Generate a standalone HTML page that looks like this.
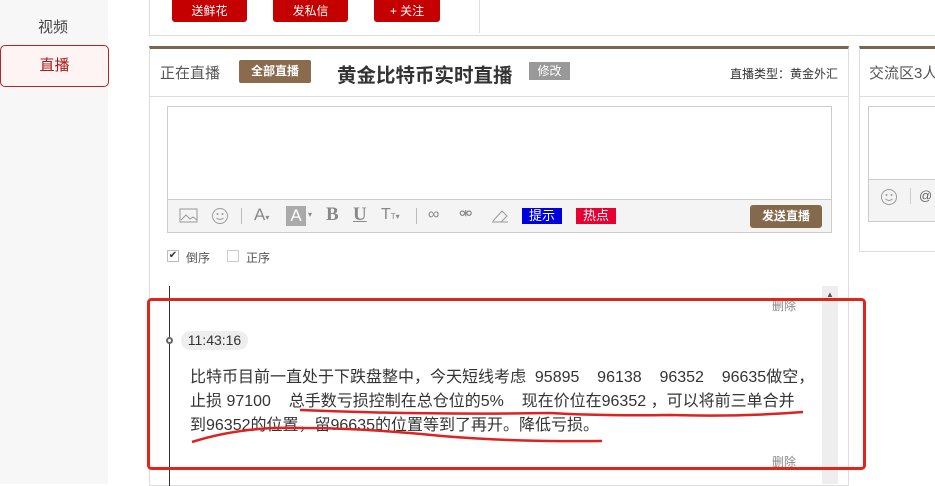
<!DOCTYPE html>
<html><head><meta charset="utf-8"><style>
*{margin:0;padding:0;box-sizing:border-box}
body{width:935px;height:484px;overflow:hidden;background:#fff;font-family:"Liberation Sans","Noto Sans CJK SC",sans-serif;position:relative;color:#333}
.a{position:absolute;white-space:nowrap}
.btn{position:absolute;top:0;height:22px;background:#c40000;color:#fff;font-size:12px;text-align:center;line-height:22px;border-radius:0 0 3px 3px}
.tb{position:absolute;top:205px;font-size:17px;color:#888;line-height:20px}
</style></head><body>
<div class="a" style="left:0;top:0;width:108px;height:484px;background:#f7f7f7"></div>
<div class="a" style="left:38px;top:16px;font-size:15px;color:#444">视频</div>
<div class="a" style="left:0;top:45px;width:109px;height:42px;border:1px solid #b22;border-radius:5px;background:#fff4f4;color:#b01818;font-size:15px;text-align:center;line-height:40px">直播</div>

<div class="a" style="left:149px;top:-2px;width:800px;height:38px;border:1px solid #ddd"></div>
<div class="btn" style="left:172px;width:75px">送鲜花</div>
<div class="btn" style="left:273px;width:75px">发私信</div>
<div class="btn" style="left:374px;width:66px">+ 关注</div>
<div class="a" style="left:479px;top:0;width:1px;height:33px;background:#ddd"></div>

<div class="a" style="left:149px;top:46px;width:700px;height:440px;border:1px solid #ddd;border-top:3px solid #7b6550"></div>
<div class="a" style="left:150px;top:96px;width:698px;height:1px;background:#ddd"></div>
<div class="a" style="left:160px;top:62px;font-size:15px;color:#555">正在直播</div>
<div class="a" style="left:239px;top:60px;width:72px;height:23px;background:#8b6b4e;color:#fff;font-size:12px;font-weight:bold;text-align:center;line-height:23px;border-radius:2px">全部直播</div>
<div class="a" style="left:337px;top:59px;font-size:19.5px;font-weight:bold;color:#333">黄金比特币实时直播</div>
<div class="a" style="left:529px;top:62px;width:41px;height:18px;background:#999;color:#fff;font-size:12px;text-align:center;line-height:18px">修改</div>
<div class="a" style="left:730px;top:65px;font-size:12px;color:#333">直播类型：黄金外汇</div>

<div class="a" style="left:167px;top:106px;width:665px;height:127px;border:1px solid #ccc"></div>
<div class="a" style="left:168px;top:199px;width:663px;height:33px;background:#f4f4f4;border-top:1px solid #ccc"></div>
<svg class="a" style="left:179px;top:208px" width="20" height="16"><rect x="1" y="1" width="17" height="13" fill="none" stroke="#999"/><path d="M2 12l5-5 4 4 3-2 4 3" fill="none" stroke="#999"/></svg>
<svg class="a" style="left:211px;top:207px" width="18" height="18"><circle cx="9" cy="9" r="7.5" fill="none" stroke="#999"/><circle cx="6.5" cy="7" r="1" fill="#999"/><circle cx="11.5" cy="7" r="1" fill="#999"/><path d="M5.5 11q3.5 3 7 0" fill="none" stroke="#999"/></svg>
<div class="a" style="left:241px;top:208px;width:1px;height:16px;background:#bbb"></div>
<div class="tb" style="left:254px">A<span style="font-size:8px">▾</span></div>
<div class="a" style="left:286px;top:206px;width:20px;height:20px;background:#aaa;color:#fff;font-size:17px;text-align:center;line-height:20px">A</div><div class="a" style="left:308px;top:210px;font-size:8px;color:#888">▾</div>
<div class="tb" style="left:326px;font-family:'Liberation Serif',serif;font-weight:bold;font-size:19px">B</div>
<div class="tb" style="left:353px;font-family:'Liberation Serif',serif;font-weight:bold;font-size:19px;text-decoration:underline">U</div>
<div class="tb" style="left:381px;font-size:16px">T<span style="font-size:8px">T▾</span></div>
<div class="a" style="left:416px;top:208px;width:1px;height:16px;background:#bbb"></div>
<div class="tb" style="left:428px;font-size:16px">∞</div>
<div class="tb" style="left:459px;font-size:16px">⚮</div>
<svg class="a" style="left:490px;top:208px" width="20" height="16"><path d="M2 14h16M3 13l9-10 5 5-6 6" fill="none" stroke="#999"/></svg>
<div class="a" style="left:522px;top:208px;width:40px;height:16px;background:#0000dd;color:#fff;font-size:13px;text-align:center;line-height:16px">提示</div>
<div class="a" style="left:576px;top:208px;width:40px;height:16px;background:#e60033;color:#fff;font-size:13px;text-align:center;line-height:16px">热点</div>
<div class="a" style="left:750px;top:205px;width:72px;height:23px;background:#85694c;color:#fff;font-size:12px;font-weight:bold;text-align:center;line-height:23px;border-radius:3px">发送直播</div>

<div class="a" style="left:167px;top:250px;width:12px;height:12px;border:1px solid #bbb;font-size:10px;line-height:10px;text-align:center;color:#333">✔</div>
<div class="a" style="left:186px;top:249px;font-size:12px;color:#555">倒序</div>
<div class="a" style="left:227px;top:250px;width:12px;height:12px;border:1px solid #ccc"></div>
<div class="a" style="left:246px;top:249px;font-size:12px;color:#555">正序</div>

<div class="a" style="left:169px;top:286px;width:1px;height:200px;background:#333"></div>
<div class="a" style="left:166px;top:337px;width:7px;height:7px;border:2px solid #666;border-radius:50%;background:#fff"></div>
<div class="a" style="left:822px;top:286px;width:16px;height:198px;background:#eee"></div>
<div class="a" style="left:826px;top:290px;font-size:8px;color:#555">▲</div>
<div class="a" style="left:772px;top:297px;font-size:12px;color:#888">删除</div>
<div class="a" style="left:772px;top:453px;font-size:12px;color:#888">删除</div>
<div class="a" style="left:181px;top:331px;width:67px;height:19px;background:#eee;border-radius:10px;font-size:14px;line-height:19px;text-align:center;color:#333">11:43:16</div>
<div class="a" style="left:190px;top:366px;width:630px;font-size:16px;line-height:24px;color:#333">比特币目前一直处于下跌盘整中，今天短线考虑&nbsp;&nbsp;95895&nbsp;&nbsp;&nbsp; 96138&nbsp;&nbsp;&nbsp; 96352&nbsp;&nbsp;&nbsp; 96635做空，<br>止损 97100&nbsp;&nbsp;&nbsp; 总手数亏损控制在总仓位的5%&nbsp;&nbsp;&nbsp; 现在价位在96352 ，可以将前三单合并<br>到96352的位置，留96635的位置等到了再开。降低亏损。</div>
<svg class="a" style="left:140px;top:280px" width="740" height="204"><path d="M160 130q120 5 250 3 50 3 120 2 70 2 133 -3" fill="none" stroke="#d22" stroke-width="2.5"/><path d="M52 162q50-16 110-14 60 0 140 8 70 6 160 5" fill="none" stroke="#d22" stroke-width="2.5"/><rect x="8.5" y="19.5" width="716" height="169" rx="3" fill="none" stroke="#e3241c" stroke-width="3"/></svg>

<div class="a" style="left:859px;top:46px;width:90px;height:206px;border:1px solid #ddd;border-top:3px solid #7b6550"></div>
<div class="a" style="left:860px;top:96px;width:80px;height:1px;background:#ddd"></div>
<div class="a" style="left:869px;top:62px;font-size:15px;color:#555">交流区3人</div>
<div class="a" style="left:868px;top:106px;width:80px;height:116px;border:1px solid #ccc"></div>
<div class="a" style="left:869px;top:179px;width:70px;height:42px;background:#f4f4f4;border-top:1px solid #ccc"></div>
<svg class="a" style="left:880px;top:188px" width="18" height="18"><circle cx="9" cy="9" r="7.5" fill="none" stroke="#999"/><circle cx="6.5" cy="7" r="1" fill="#999"/><circle cx="11.5" cy="7" r="1" fill="#999"/><path d="M5.5 11q3.5 3 7 0" fill="none" stroke="#999"/></svg>
<div class="a" style="left:910px;top:188px;width:1px;height:16px;background:#ccc"></div>
<div class="a" style="left:919px;top:188px;font-size:13px;color:#666">@</div>
</body></html>
